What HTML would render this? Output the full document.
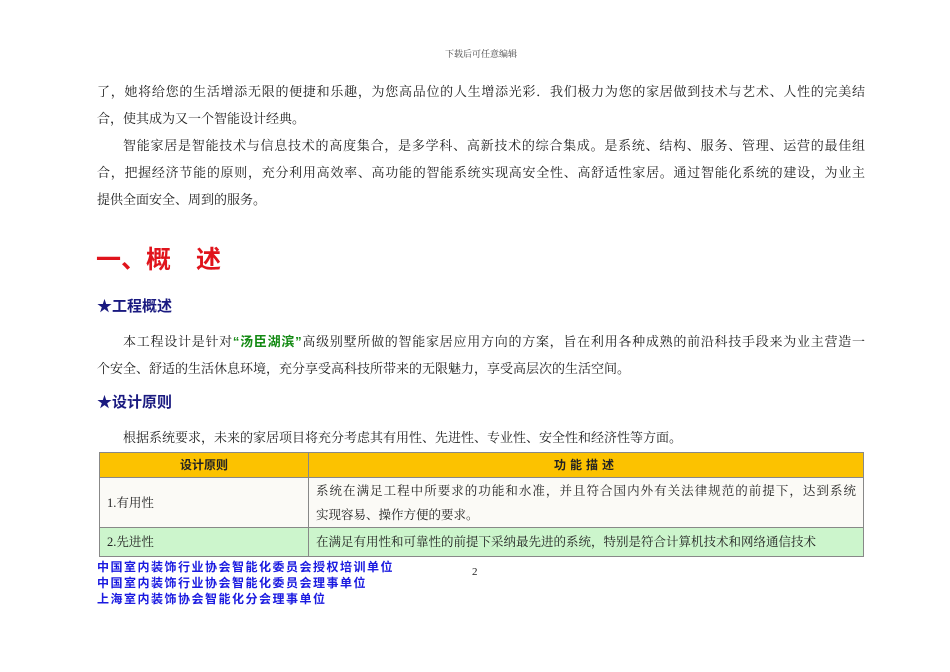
<!DOCTYPE html>
<html><head><meta charset="utf-8"><style>
body{margin:0;width:950px;height:672px;background:#fff;position:relative;overflow:hidden;font-family:"Liberation Serif","Noto Serif CJK SC",serif;color:#222}
.a{position:absolute;white-space:nowrap}
.l{position:absolute;left:97px;width:768px;font-size:13px;text-align:justify;text-align-last:justify;white-space:nowrap;overflow:hidden}
.s{text-align-last:left}
.h{font-family:"Liberation Sans","Noto Sans CJK SC",sans-serif;font-weight:bold}
table{position:absolute;left:99px;top:452px;width:765px;border-collapse:collapse;font-size:12.5px;table-layout:fixed}
td{border:1px solid #888;padding:0 7px;white-space:nowrap;overflow:hidden;line-height:16px;box-sizing:border-box}
.f{position:absolute;left:97px;font-family:"Liberation Sans","Noto Sans CJK SC",sans-serif;font-weight:bold;color:#1a1ae0;font-size:12px;letter-spacing:1.5px;line-height:16px}
</style></head><body>
<div class="a" style="left:445px;top:47px;font-size:9px;color:#444">下载后可任意编辑</div>
<div class="l" style="top:81px">了，她将给您的生活增添无限的便捷和乐趣，为您高品位的人生增添光彩．我们极力为您的家居做到技术与艺术、人性的完美结</div>
<div class="l s" style="top:108px">合，使其成为又一个智能设计经典。</div>
<div class="l" style="top:135px;left:123px;width:742px">智能家居是智能技术与信息技术的高度集合，是多学科、高新技术的综合集成。是系统、结构、服务、管理、运营的最佳组</div>
<div class="l" style="top:162px">合，把握经济节能的原则，充分利用高效率、高功能的智能系统实现高安全性、高舒适性家居。通过智能化系统的建设，为业主</div>
<div class="l s" style="top:189px">提供全面安全、周到的服务。</div>
<div class="a h" style="left:96px;top:240px;font-size:25px;color:#e0141c">一、概　述</div>
<div class="a h" style="left:97px;top:295px;font-size:15px;color:#1a1a80">★工程概述</div>
<div class="l" style="top:331px;left:123px;width:742px">本工程设计是针对<b class="h" style="color:#138a13">“汤臣湖滨”</b>高级别墅所做的智能家居应用方向的方案，旨在利用各种成熟的前沿科技手段来为业主营造一</div>
<div class="l s" style="top:358px">个安全、舒适的生活休息环境，充分享受高科技所带来的无限魅力，享受高层次的生活空间。</div>
<div class="a h" style="left:97px;top:391px;font-size:15px;color:#1a1a80">★设计原则</div>
<div class="l s" style="top:427px;left:123px">根据系统要求，未来的家居项目将充分考虑其有用性、先进性、专业性、安全性和经济性等方面。</div>
<table>
<tr style="background:#fcc200"><td class="h" style="height:25px;width:209px;text-align:center;font-size:12px">设计原则</td><td class="h" style="text-align:center;font-size:12px;letter-spacing:4px">功能描述</td></tr>
<tr style="background:#fbfaf6"><td style="height:50px">1.有用性</td><td style="line-height:24px"><div style="text-align:justify;text-align-last:justify">系统在满足工程中所要求的功能和水准，并且符合国内外有关法律规范的前提下，达到系统</div><div>实现容易、操作方便的要求。</div></td></tr>
<tr style="background:#ccf5cc"><td style="height:29px">2.先进性</td><td>在满足有用性和可靠性的前提下采纳最先进的系统，特别是符合计算机技术和网络通信技术</td></tr>
</table>
<div class="f" style="top:559px">中国室内装饰行业协会智能化委员会授权培训单位</div>
<div class="f" style="top:575px">中国室内装饰行业协会智能化委员会理事单位</div>
<div class="f" style="top:591px">上海室内装饰协会智能化分会理事单位</div>
<div class="a" style="left:472px;top:566px;font-size:11px">2</div>
</body></html>
